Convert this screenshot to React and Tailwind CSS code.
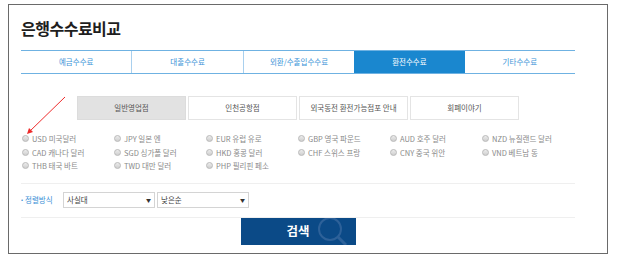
import React from "react";

const FONT = { fontFamily: '"Noto Sans CJK KR", "Noto Sans", sans-serif' };

const TABS = ["예금수수료", "대출수수료", "외환/수출입수수료", "환전수수료", "기타수수료"];
const SUB_TABS = ["일반영업점", "인천공항점", "외국동전 환전가능점포 안내", "회폐이야기"];
const CURRENCIES = [
  "USD 미국달러",
  "JPY 일본 엔",
  "EUR 유럽 유로",
  "GBP 영국 파운드",
  "AUD 호주 달러",
  "NZD 뉴질랜드 달러",
  "CAD 캐나다 달러",
  "SGD 싱가폴 달러",
  "HKD 홍콩 달러",
  "CHF 스위스 프랑",
  "CNY 중국 위안",
  "VND 베트남 동",
  "THB 태국 바트",
  "TWD 대만 달러",
  "PHP 필리핀 페소",
];

function Radio({ label }) {
  return (
    <div className="flex items-center h-[13.5px]">
      <span className="w-[7px] h-[7px] rounded-full border border-[#b9b9b9] bg-gradient-to-b from-[#ececec] to-[#cfcfcf] shrink-0" />
      <span className="ml-[3px] text-[7.5px] leading-none text-[#8a8a8a] whitespace-nowrap">
        {label}
      </span>
    </div>
  );
}

function Select({ value }) {
  return (
    <div className="w-[92px] h-[16px] border border-[#d4d4d4] bg-white flex items-center justify-between px-[3px]">
      <span className="text-[7.5px] text-[#444] leading-none">{value}</span>
      <span className="text-[5px] text-[#333] leading-none">▼</span>
    </div>
  );
}

export default function App() {
  return (
    <div className="relative w-[626px] h-[262px] bg-white" style={FONT}>
      <div className="absolute left-[8px] top-[4px] w-[600px] h-[250px] border border-[#6a6a6a] pl-[12px] pr-[32px]">
        <h1 className="mt-[13px] text-[16px] leading-[20px] font-bold text-[#1e1e1e] tracking-[-0.5px]">
          은행수수료비교
        </h1>

        <div className="mt-[12px] flex border-t border-b border-[#6fb2e2] h-[24px]">
          {TABS.map((t, i) => (
            <div
              key={t}
              className={
                "flex-1 flex items-center justify-center text-[7.5px] " +
                (i === 3
                  ? "bg-[#1a87cf] text-white"
                  : "text-[#3b93d8]") +
                (i > 0 && i !== 3 && i !== 4 ? " border-l border-[#a9d0ee]" : "")
              }
            >
              {t}
            </div>
          ))}
        </div>

        <div className="mt-[22px] flex justify-center gap-[2px]">
          {SUB_TABS.map((t, i) => (
            <div
              key={t}
              className={
                "w-[109px] h-[24px] flex items-center justify-center text-[7.5px] text-[#555] border " +
                (i === 0 ? "bg-[#e2e2e2] border-[#dcdcdc]" : "bg-white border-[#e4e4e4]")
              }
            >
              {t}
            </div>
          ))}
        </div>

        <div className="mt-[12px] pl-[1px] grid grid-cols-[repeat(6,92px)]">
          {CURRENCIES.map((c) => (
            <Radio key={c} label={c} />
          ))}
        </div>

        <div className="mt-[10px] h-px bg-[#efefef]" />

        <div className="mt-[8px] flex items-center">
          <div className="w-[42px] flex items-center text-[7.5px] text-[#3b8fd6] leading-none">
            <span className="mr-[2px] text-[6px]">•</span>
            <span>정렬방식</span>
          </div>
          <div className="flex gap-[2px]">
            <Select value="사실대" />
            <Select value="낮은순" />
          </div>
        </div>

        <div className="mt-[9px] h-px bg-[#efefef]" />

        <div className="flex justify-center">
          <button className="relative w-[115px] h-[27px] bg-[#0b4a87] overflow-hidden flex items-center justify-center">
            <span className="text-white font-bold text-[12.5px] leading-none">검색</span>
            <svg
              className="absolute left-[74px] top-0"
              width="41"
              height="27"
              viewBox="0 0 41 27"
            >
              <circle cx="15" cy="11" r="11" fill="none" stroke="#2d6199" strokeWidth="2" />
              <line x1="23" y1="19" x2="31" y2="27" stroke="#2d6199" strokeWidth="3" />
            </svg>
          </button>
        </div>
      </div>

      <svg className="absolute left-0 top-0 pointer-events-none" width="626" height="262">
        <line x1="65" y1="97" x2="29" y2="132" stroke="#ee2b2b" strokeWidth="1" />
        <polygon points="27,134 29,128 33,132" fill="#ee2b2b" />
      </svg>
    </div>
  );
}
